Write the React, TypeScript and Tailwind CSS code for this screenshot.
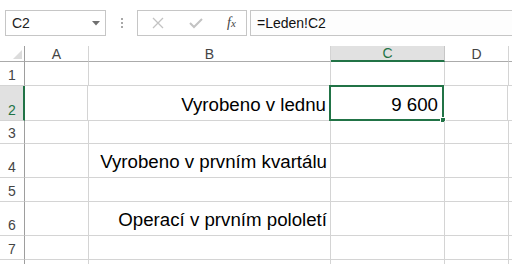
import React from "react";

const rows = [
  { n: "1", h: "h-[24px]", b: "" },
  { n: "2", h: "h-[35px]", b: "Vyrobeno v lednu", c: "9 600", active: true },
  { n: "3", h: "h-[23px]", b: "" },
  { n: "4", h: "h-[34px]", b: "Vyrobeno v prvním kvartálu" },
  { n: "5", h: "h-[24px]", b: "" },
  { n: "6", h: "h-[34px]", b: "Operací v prvním pololetí" },
  { n: "7", h: "h-[24px]", b: "" },
  { n: "", h: "h-[24px]", b: "" },
];

function XIcon() {
  return (
    <svg width="12" height="12" viewBox="0 0 12 12">
      <path d="M1 1 L11 11 M11 1 L1 11" stroke="#c3c3c3" strokeWidth="1.3" fill="none" />
    </svg>
  );
}

function CheckIcon() {
  return (
    <svg width="14" height="12" viewBox="0 0 14 12">
      <path d="M1 6 L5 10 L13 2" stroke="#c3c3c3" strokeWidth="2" fill="none" />
    </svg>
  );
}

export default function App() {
  return (
    <div className="w-[512px] h-[264px] overflow-hidden bg-white font-['Liberation_Sans',Arial,sans-serif] text-black">
      {/* formula bar */}
      <div className="flex items-stretch pt-[10px] h-[36px]">
        <div className="ml-[5px] w-[101px] border border-[#c6c6c6] flex items-center pl-[6px] pr-[5px] text-[14px] text-[#222]">
          <span className="flex-1">C2</span>
          <svg width="8" height="5" viewBox="0 0 8 5">
            <path d="M0 0 H8 L4 4.5 Z" fill="#707070" />
          </svg>
        </div>
        <div className="w-[31px] flex flex-col items-center justify-center gap-[2px]">
          <span className="w-[2px] h-[2px] bg-[#a8a8a8]" />
          <span className="w-[2px] h-[2px] bg-[#a8a8a8]" />
          <span className="w-[2px] h-[2px] bg-[#a8a8a8]" />
        </div>
        <div className="w-[110px] border border-[#c6c6c6] flex items-center pl-[14px]">
          <span className="w-[12px] flex justify-center"><XIcon /></span>
          <span className="ml-[25px] flex"><CheckIcon /></span>
          <span className="ml-[24px] font-['Liberation_Serif',serif] italic text-[14px] text-[#444] leading-none">
            f<span className="text-[11px]">x</span>
          </span>
        </div>
        <div className="ml-[3px] flex-1 border-y border-l border-[#c6c6c6] bg-[#fdfdfd] flex items-center pl-[6px] text-[14px] text-[#111]">
          =Leden!C2
        </div>
      </div>

      {/* column headers */}
      <div className="mt-[10px] flex h-[16px] text-[14px] text-[#444]">
        <div className="w-[25px] border-r border-[#9e9e9e] border-b border-b-[#ababab] flex items-end justify-end pr-[2px] pb-[2px]">
          <svg width="9" height="9" viewBox="0 0 9 9">
            <path d="M9 0 V9 H0 Z" fill="#dcdcdc" />
          </svg>
        </div>
        <div className="w-[64px] border-r border-[#d4d4d4] border-b border-b-[#ababab] flex items-center justify-center leading-none">A</div>
        <div className="w-[242px] border-r border-[#d4d4d4] border-b border-b-[#ababab] flex items-center justify-center leading-none">B</div>
        <div className="w-[114px] bg-[#e1e1e1] border-r border-[#c6c6c6] border-b-2 border-b-[#217346] flex items-center justify-center leading-none text-[#217346]">C</div>
        <div className="w-[64px] border-r border-[#d4d4d4] border-b border-b-[#ababab] flex items-center justify-center leading-none">D</div>
        <div className="flex-1 border-b border-[#ababab]" />
      </div>

      {/* grid */}
      {rows.map((r, i) => (
        <div key={i} className={`flex ${r.h}`}>
          <div
            className={`w-[25px] border-b border-[#d4d4d4] flex items-end justify-center pb-[2px] text-[14px] leading-none ${
              r.active
                ? "bg-[#e1e1e1] border-r-2 border-r-[#217346] text-[#217346]"
                : "border-r border-r-[#9e9e9e] text-[#444]"
            }`}
          >
            <span className={r.active ? "pb-[1px] pl-[1px]" : "pb-[1px]"}>{r.n}</span>
          </div>
          <div className={`${r.active ? "w-[63px]" : "w-[64px]"} border-r border-b border-[#d4d4d4]`} />
          <div className="w-[242px] border-r border-b border-[#d4d4d4] flex items-end justify-end pr-[3px] pb-[5px] text-[18.7px] leading-[21px] whitespace-nowrap">
            {r.b}
          </div>
          <div className="relative w-[114px] border-r border-b border-[#d4d4d4] flex items-end justify-end pr-[5px] pb-[5px] text-[18.7px] leading-[21px]">
            {r.c}
            {r.active && (
              <div className="absolute -left-[1px] -top-[1px] -right-[1px] -bottom-[1px] border-2 border-[#217346]">
                <div className="absolute -right-[4px] -bottom-[4px] w-[6px] h-[6px] bg-[#217346] border border-white" />
              </div>
            )}
          </div>
          <div className="w-[64px] border-r border-b border-[#d4d4d4]" />
          <div className="flex-1 border-b border-[#d4d4d4]" />
        </div>
      ))}
    </div>
  );
}
